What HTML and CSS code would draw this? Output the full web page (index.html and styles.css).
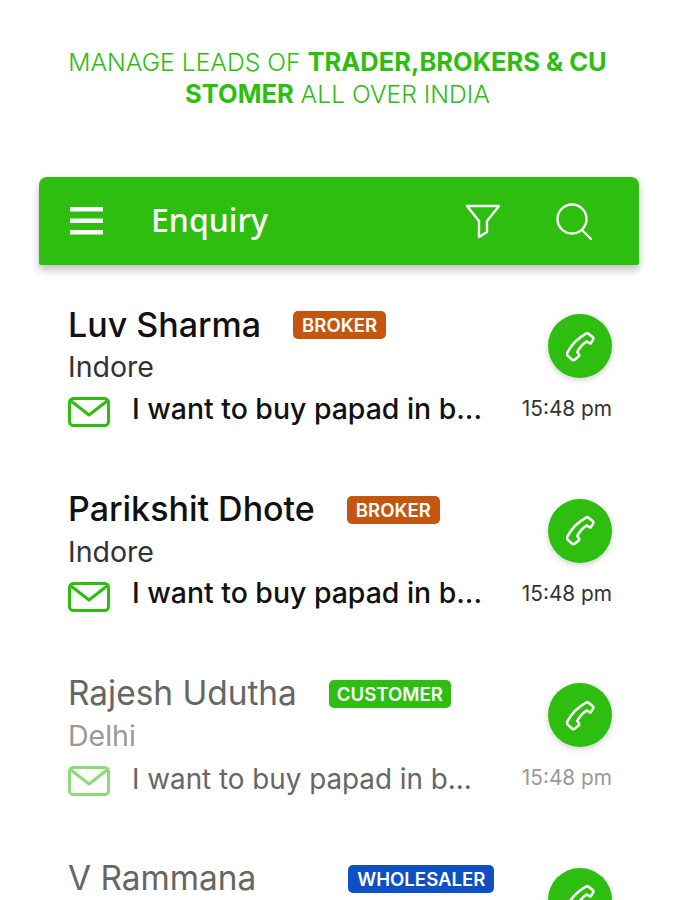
FILE: index.html
```html
<!DOCTYPE html>
<html lang="en">
<head>
    <meta charset="UTF-8">
    <meta name="viewport" content="width=device-width, initial-scale=1.0">
    <title>Enquiry</title>
    <link rel="stylesheet" href="styles.css">
</head>
<body>

    <h1 class="headline">MANAGE LEADS OF <b>TRADER,BROKERS &amp; CU<br>STOMER</b> ALL OVER INDIA</h1>

    <header class="appbar">
        <svg class="menu-icon" width="34" height="28" viewBox="0 0 34 28" fill="#fff">
            <rect x="0" y="0" width="33" height="4.5"/>
            <rect x="0" y="11.5" width="33" height="4.5"/>
            <rect x="0" y="23" width="33" height="4.5"/>
        </svg>
        <div class="appbar-title">Enquiry</div>
        <svg class="filter-icon" width="36" height="36" viewBox="0 0 36 36" fill="none" stroke="#fff" stroke-width="2.4" stroke-linejoin="round">
            <path d="M2 3H34L22 18V29L14 34V18Z"/>
        </svg>
        <svg class="search-icon" width="38" height="38" viewBox="0 0 38 38" fill="none" stroke="#fff" stroke-width="2.4" stroke-linecap="round">
            <circle cx="17" cy="17" r="14.5"/>
            <path d="M27 28L36 37"/>
        </svg>
    </header>

    <div class="list">

        <div class="row">
            <div class="row-main">
                <div class="name-line">
                    <span class="name">Luv Sharma</span>
                    <span class="tag tag-broker">BROKER</span>
                </div>
                <div class="city">Indore</div>
                <div class="msg-line">
                    <svg class="mail-icon" width="42" height="30" viewBox="0 0 42 30" fill="none" stroke="#2dbe0f" stroke-width="3" stroke-linejoin="round">
                        <rect x="1.5" y="1.5" width="39" height="27" rx="4"/>
                        <path d="M3 4L21 18L39 4"/>
                    </svg>
                    <span class="msg">I want to buy papad in b...</span>
                </div>
            </div>
            <div class="row-side">
                <div class="call">
                    <svg width="33" height="33" viewBox="0 0 36 36" fill="none" stroke="#fff" stroke-width="2.8" stroke-linejoin="round">
                        <path d="M26 3.5L31.5 8Q32.5 9 32 10L29.5 14Q29 15 28 14.5L25 12.5C21 15 17 19 14.5 24L16.5 27Q17 28 16 29L11.5 32.5Q10 33.5 9 32.5L4 28Q3 27 3.5 25C8 16 15 9 24 4Q25 3 26 3.5Z"/>
                    </svg>
                </div>
                <div class="time">15:48 pm</div>
            </div>
        </div>

        <div class="row">
            <div class="row-main">
                <div class="name-line">
                    <span class="name">Parikshit Dhote</span>
                    <span class="tag tag-broker">BROKER</span>
                </div>
                <div class="city">Indore</div>
                <div class="msg-line">
                    <svg class="mail-icon" width="42" height="30" viewBox="0 0 42 30" fill="none" stroke="#2dbe0f" stroke-width="3" stroke-linejoin="round">
                        <rect x="1.5" y="1.5" width="39" height="27" rx="4"/>
                        <path d="M3 4L21 18L39 4"/>
                    </svg>
                    <span class="msg">I want to buy papad in b...</span>
                </div>
            </div>
            <div class="row-side">
                <div class="call">
                    <svg width="33" height="33" viewBox="0 0 36 36" fill="none" stroke="#fff" stroke-width="2.8" stroke-linejoin="round">
                        <path d="M26 3.5L31.5 8Q32.5 9 32 10L29.5 14Q29 15 28 14.5L25 12.5C21 15 17 19 14.5 24L16.5 27Q17 28 16 29L11.5 32.5Q10 33.5 9 32.5L4 28Q3 27 3.5 25C8 16 15 9 24 4Q25 3 26 3.5Z"/>
                    </svg>
                </div>
                <div class="time">15:48 pm</div>
            </div>
        </div>

        <div class="row row-read">
            <div class="row-main">
                <div class="name-line">
                    <span class="name">Rajesh Udutha</span>
                    <span class="tag tag-customer">CUSTOMER</span>
                </div>
                <div class="city">Delhi</div>
                <div class="msg-line">
                    <svg class="mail-icon" width="42" height="30" viewBox="0 0 42 30" fill="none" stroke="#2dbe0f" stroke-width="3" stroke-linejoin="round">
                        <rect x="1.5" y="1.5" width="39" height="27" rx="4"/>
                        <path d="M3 4L21 18L39 4"/>
                    </svg>
                    <span class="msg">I want to buy papad in b...</span>
                </div>
            </div>
            <div class="row-side">
                <div class="call">
                    <svg width="33" height="33" viewBox="0 0 36 36" fill="none" stroke="#fff" stroke-width="2.8" stroke-linejoin="round">
                        <path d="M26 3.5L31.5 8Q32.5 9 32 10L29.5 14Q29 15 28 14.5L25 12.5C21 15 17 19 14.5 24L16.5 27Q17 28 16 29L11.5 32.5Q10 33.5 9 32.5L4 28Q3 27 3.5 25C8 16 15 9 24 4Q25 3 26 3.5Z"/>
                    </svg>
                </div>
                <div class="time">15:48 pm</div>
            </div>
        </div>

        <div class="row row-read">
            <div class="row-main">
                <div class="name-line">
                    <span class="name">V Rammana</span>
                    <span class="tag tag-wholesaler">WHOLESALER</span>
                </div>
            </div>
            <div class="row-side">
                <div class="call">
                    <svg width="33" height="33" viewBox="0 0 36 36" fill="none" stroke="#fff" stroke-width="2.8" stroke-linejoin="round">
                        <path d="M26 3.5L31.5 8Q32.5 9 32 10L29.5 14Q29 15 28 14.5L25 12.5C21 15 17 19 14.5 24L16.5 27Q17 28 16 29L11.5 32.5Q10 33.5 9 32.5L4 28Q3 27 3.5 25C8 16 15 9 24 4Q25 3 26 3.5Z"/>
                    </svg>
                </div>
            </div>
        </div>

    </div>

</body>
</html>
```

FILE: styles.css
```css
html, body {
    height: 900px;
    overflow: hidden;
}

body {
    font-family: Inter, "Liberation Sans", sans-serif;
    margin: 0;
    padding: 0;
    background-color: #ffffff;
}

.headline {
    margin: 0;
    padding: 46px 50px 0;
    height: 177px;
    box-sizing: border-box;
    font-size: 24.7px;
    line-height: 32px;
    font-weight: 300;
    text-align: center;
    color: #2dbe0f;
}

.headline b {
    font-size: 25.5px;
    font-weight: 700;
}

.appbar {
    display: flex;
    align-items: center;
    margin: 0 36px 0 39px;
    padding: 0 46px 0 31px;
    height: 88px;
    background-color: #2dbe0f;
    border-radius: 8px 8px 2px 2px;
    box-shadow: 0 5px 8px rgba(0, 0, 0, 0.25);
}

.appbar-title {
    flex: 1;
    margin-left: 47px;
    padding-bottom: 4px;
    font-family: "Noto Sans", sans-serif;
    font-size: 32px;
    font-weight: 500;
    color: #ffffff;
}

.filter-icon {
    margin-right: 54px;
}

.list {
    height: 640px;
    overflow: hidden;
    padding: 37px 63px 0 68px;
}

.row {
    display: flex;
    justify-content: space-between;
    height: 184.5px;
}

.name-line {
    display: flex;
    align-items: center;
    height: 44px;
}

.name {
    font-size: 34px;
    font-weight: 500;
    color: #111111;
}

.tag {
    margin-top: 2px;
    margin-left: 32px;
    padding: 0 8px;
    height: 28px;
    line-height: 28px;
    border-radius: 5px;
    font-size: 18.6px;
    font-weight: 600;
    color: #ffffff;
}

.tag-broker {
    padding: 0 9px;
    background-color: #c4560f;
}

.tag-customer {
    background-color: #2dbe0f;
}

.tag-wholesaler {
    margin-left: 92px;
    padding: 0 9px;
    background-color: #0e4fc4;
}

.city {
    margin-top: 2px;
    height: 38px;
    line-height: 38px;
    font-size: 28.5px;
    color: #333333;
}

.msg-line {
    display: flex;
    align-items: center;
    margin-top: 4px;
    height: 36px;
}

.mail-icon {
    margin-top: 8px;
    margin-right: 22px;
}

.msg {
    font-size: 28.4px;
    font-weight: 500;
    color: #111111;
}

.row-side {
    display: flex;
    flex-direction: column;
    align-items: flex-end;
}

.call {
    display: flex;
    justify-content: center;
    align-items: center;
    margin-top: 12px;
    width: 64px;
    height: 64px;
    border-radius: 50%;
    background-color: #2dbe0f;
    box-shadow: 0 2px 6px rgba(0, 0, 0, 0.2);
}

.time {
    margin-top: 17px;
    font-size: 20.8px;
    line-height: 28px;
    color: #333333;
}

.row-read .name {
    font-size: 33.4px;
    font-weight: 400;
    color: #666666;
}

.row-read .msg-line {
    margin-top: 6px;
}

.row-read .msg {
    font-size: 27.8px;
    font-weight: 400;
    color: #666666;
}

.row-read .city,
.row-read .time {
    color: #999999;
}

.row-read .mail-icon {
    margin-top: 4px;
    opacity: 0.55;
}
```
